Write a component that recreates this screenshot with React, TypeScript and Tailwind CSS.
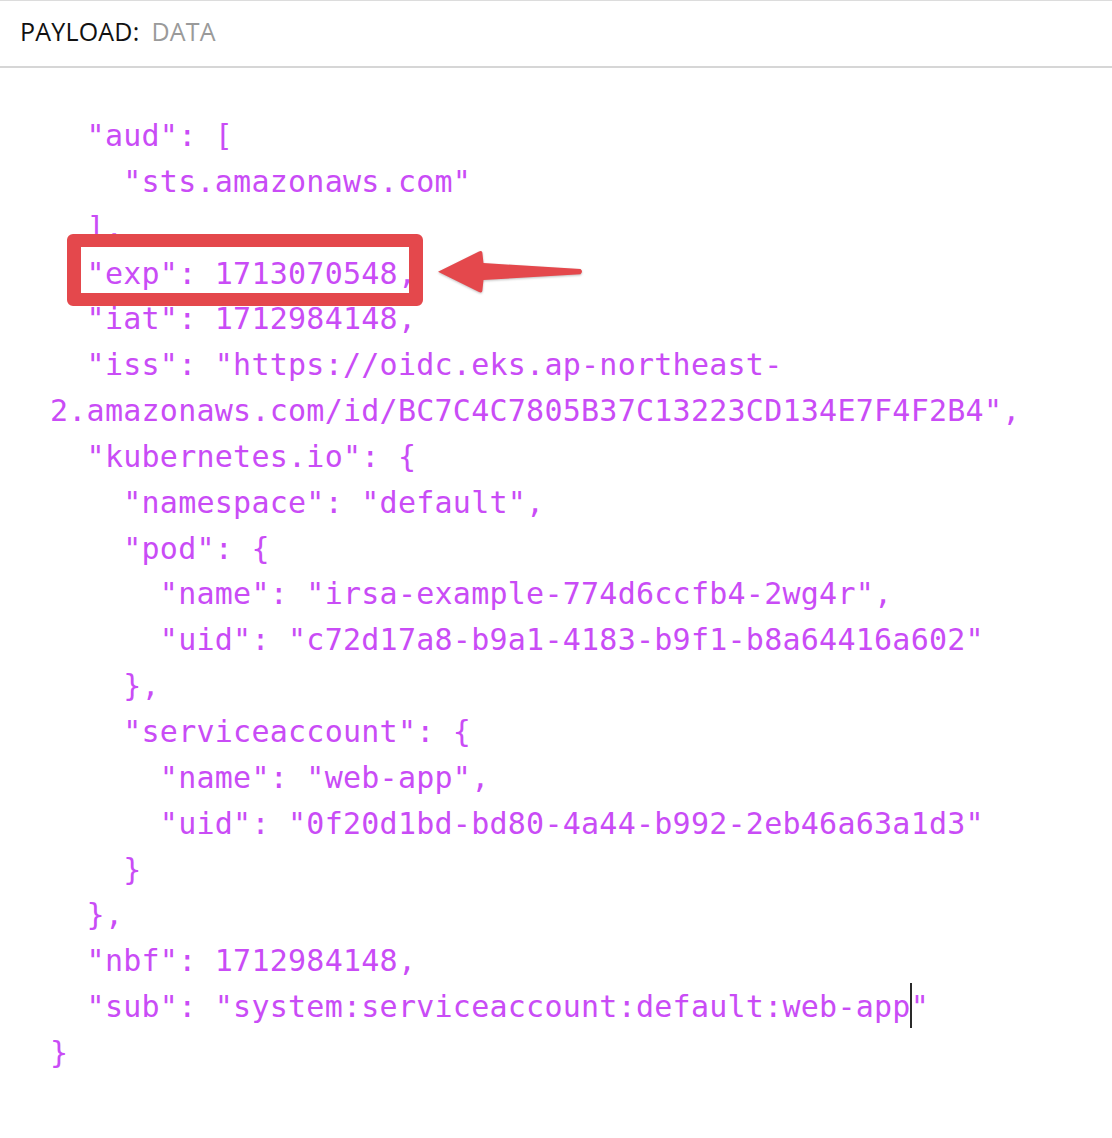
const lines: string[] = [
  '  "aud": [',
  '    "sts.amazonaws.com"',
  '  ],',
  '  "exp": 1713070548,',
  '  "iat": 1712984148,',
  '  "iss": "https://oidc.eks.ap-northeast-',
  '2.amazonaws.com/id/BC7C4C7805B37C13223CD134E7F4F2B4",',
  '  "kubernetes.io": {',
  '    "namespace": "default",',
  '    "pod": {',
  '      "name": "irsa-example-774d6ccfb4-2wg4r",',
  '      "uid": "c72d17a8-b9a1-4183-b9f1-b8a64416a602"',
  '    },',
  '    "serviceaccount": {',
  '      "name": "web-app",',
  '      "uid": "0f20d1bd-bd80-4a44-b992-2eb46a63a1d3"',
  '    }',
  '  },',
  '  "nbf": 1712984148,',
]

function Arrow() {
  return (
    <svg
      className="absolute left-[430px] top-[244px] drop-shadow-[0_1px_1px_rgba(0,0,0,0.25)]"
      width="160"
      height="56"
      viewBox="430 244 160 56"
    >
      <path
        d="M438 271.7 L479 251.5 Q482.5 250 482.5 254 L483.5 263 L580.5 269 Q583.5 271.5 580.5 274.3 L483.5 280 L482.5 289.5 Q482.5 293.5 479 292 Z"
        fill="#e4484c"
      />
    </svg>
  )
}

export default function App() {
  return (
    <div className="relative min-h-screen bg-white">
      {/* header */}
      <div className="flex h-[68px] items-center gap-[12px] border-t border-b-2 border-t-[#dcdcdc] border-b-[#d6d6d6] pb-[3px] pl-[20px] font-['Open_Sans',sans-serif] text-[25px] tracking-[0.2px]">
        <span className="text-[#111]">PAYLOAD:</span>
        <span className="text-[#9a9a9a]">DATA</span>
      </div>

      {/* decoded json */}
      <div className="pt-[45px] pl-[50px] font-['DejaVu_Sans_Mono',monospace] text-[30px] leading-[45.85px] tracking-[0.25px] text-[#c94cf6]">
        {lines.map((l, i) => (
          <div key={i} className="whitespace-pre">
            {l}
          </div>
        ))}
        <div className="whitespace-pre">
          {'  "sub": "system:serviceaccount:default:web-app'}
          <span className="relative inline-block w-0">
            <span className="absolute left-[-1px] top-[-34px] h-[45px] w-[2px] bg-[#2a2a2a]" />
          </span>
          {'"'}
        </div>
        <div className="whitespace-pre">{'}'}</div>
      </div>

      {/* annotation */}
      <div className="absolute left-[67px] top-[234px] h-[72px] w-[356px] rounded-[6px] border-x-[14px] border-y-[13px] border-[#e4484c]" />
      <Arrow />
    </div>
  )
}
